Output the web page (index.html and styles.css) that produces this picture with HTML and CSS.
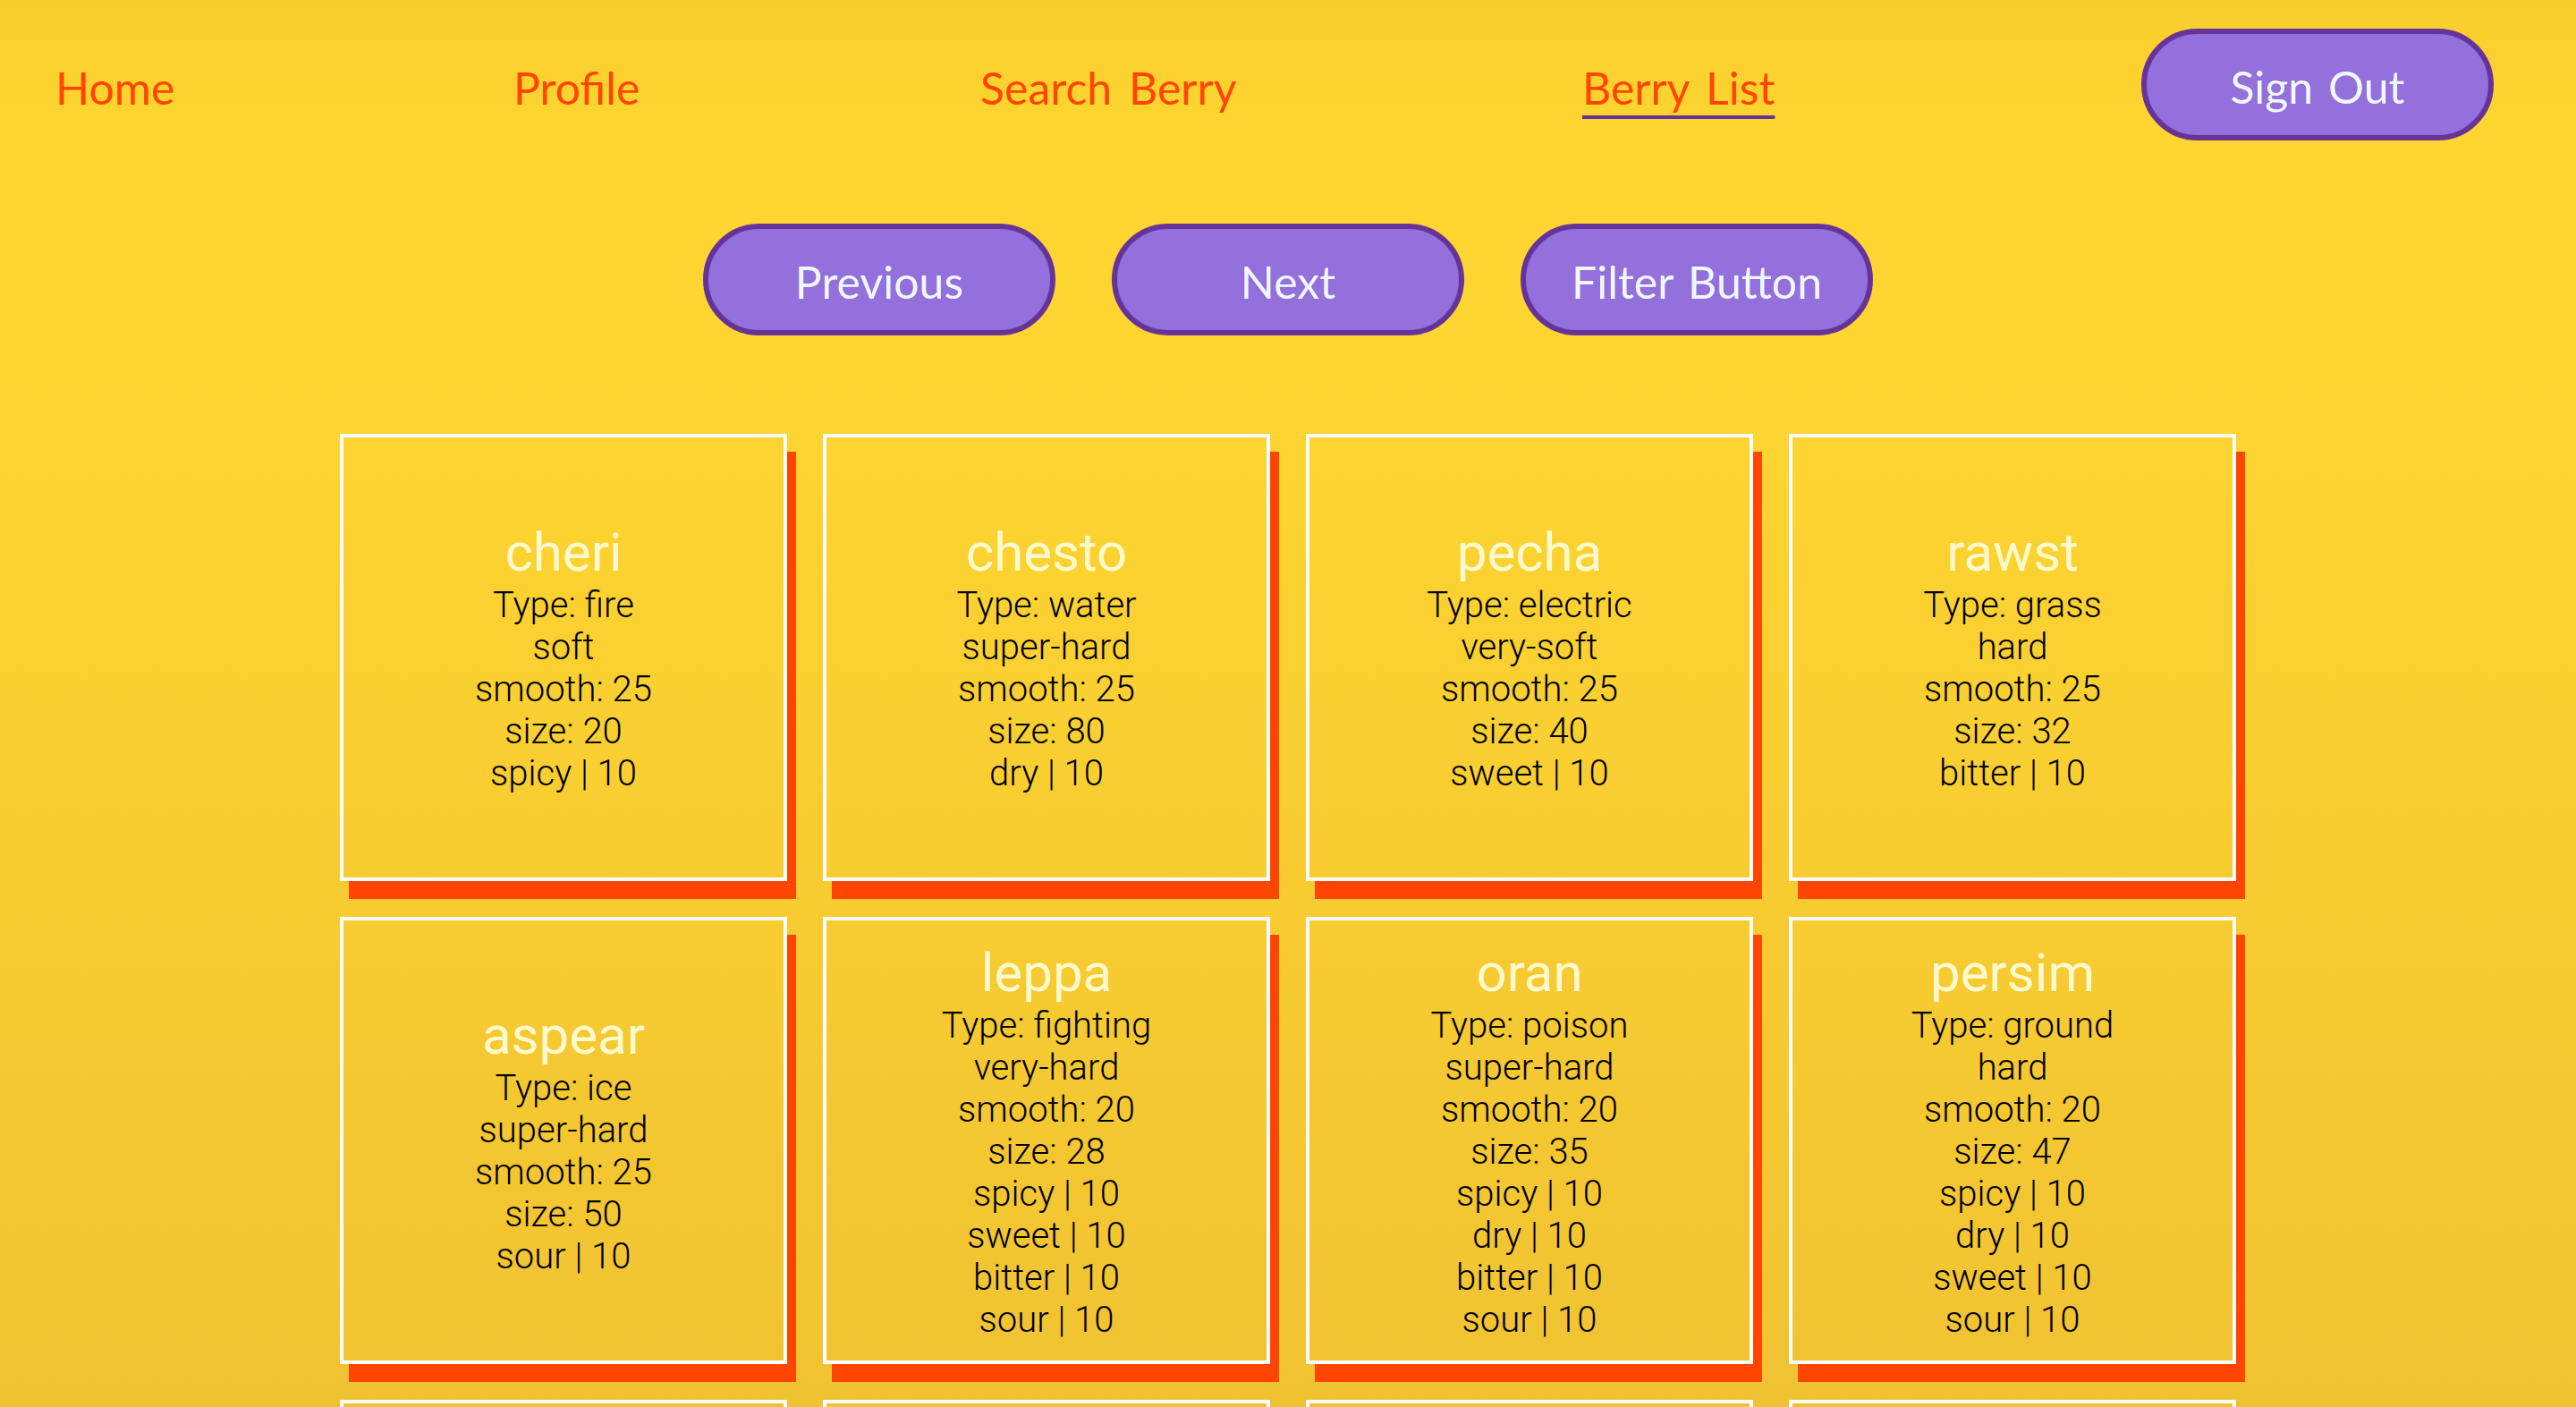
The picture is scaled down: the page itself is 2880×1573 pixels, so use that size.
FILE: index.html
```html
<!DOCTYPE html>
<html lang="en">
<head>
<meta charset="utf-8">
<title>Berry List</title>
<link rel="stylesheet" href="styles.css">
</head>
<body>
<header class="nav">
  <a class="nav-link" href="#">Home</a>
  <a class="nav-link" href="#">Profile</a>
  <a class="nav-link" href="#">Search Berry</a>
  <a class="nav-link active" href="#">Berry List</a>
  <button class="pill">Sign Out</button>
</header>

<div class="controls">
  <button class="pill">Previous</button>
  <button class="pill">Next</button>
  <button class="pill">Filter Button</button>
</div>

<main class="grid">
  <div class="card">
    <div class="name">cheri</div>
    <div class="line">Type: fire</div>
    <div class="line">soft</div>
    <div class="line">smooth: 25</div>
    <div class="line">size: 20</div>
    <div class="line">spicy | 10</div>
  </div>
  <div class="card">
    <div class="name">chesto</div>
    <div class="line">Type: water</div>
    <div class="line">super-hard</div>
    <div class="line">smooth: 25</div>
    <div class="line">size: 80</div>
    <div class="line">dry | 10</div>
  </div>
  <div class="card">
    <div class="name">pecha</div>
    <div class="line">Type: electric</div>
    <div class="line">very-soft</div>
    <div class="line">smooth: 25</div>
    <div class="line">size: 40</div>
    <div class="line">sweet | 10</div>
  </div>
  <div class="card">
    <div class="name">rawst</div>
    <div class="line">Type: grass</div>
    <div class="line">hard</div>
    <div class="line">smooth: 25</div>
    <div class="line">size: 32</div>
    <div class="line">bitter | 10</div>
  </div>
  <div class="card">
    <div class="name">aspear</div>
    <div class="line">Type: ice</div>
    <div class="line">super-hard</div>
    <div class="line">smooth: 25</div>
    <div class="line">size: 50</div>
    <div class="line">sour | 10</div>
  </div>
  <div class="card">
    <div class="name">leppa</div>
    <div class="line">Type: fighting</div>
    <div class="line">very-hard</div>
    <div class="line">smooth: 20</div>
    <div class="line">size: 28</div>
    <div class="line">spicy | 10</div>
    <div class="line">sweet | 10</div>
    <div class="line">bitter | 10</div>
    <div class="line">sour | 10</div>
  </div>
  <div class="card">
    <div class="name">oran</div>
    <div class="line">Type: poison</div>
    <div class="line">super-hard</div>
    <div class="line">smooth: 20</div>
    <div class="line">size: 35</div>
    <div class="line">spicy | 10</div>
    <div class="line">dry | 10</div>
    <div class="line">bitter | 10</div>
    <div class="line">sour | 10</div>
  </div>
  <div class="card">
    <div class="name">persim</div>
    <div class="line">Type: ground</div>
    <div class="line">hard</div>
    <div class="line">smooth: 20</div>
    <div class="line">size: 47</div>
    <div class="line">spicy | 10</div>
    <div class="line">dry | 10</div>
    <div class="line">sweet | 10</div>
    <div class="line">sour | 10</div>
  </div>
  <div class="card"></div>
  <div class="card"></div>
  <div class="card"></div>
  <div class="card"></div>
</main>
</body>
</html>
```

FILE: styles.css
```css
html {
  background: linear-gradient(180deg, #facd2e 0px, #ffd630 160px, #fdd431 500px, #f8cc31 1000px, #f0c232 1573px, #ecbc32 2400px);
  background-color: #f0c232;
}

body {
  margin: 0;
  font-family: Lato, "Open Sans", sans-serif;
}

.nav {
  display: grid;
  grid-template-columns: 512px 522px 673px 625px 394px;
  align-items: center;
  padding: 32px 0 0 62px;
}

.nav-link {
  font-family: Lato, "Open Sans", sans-serif;
  font-size: 50px;
  line-height: 60px;
  padding-top: 6px;
  color: #ff4500;
  text-decoration: none;
  word-spacing: 6px;
  justify-self: start;
}

.nav-link.active {
  text-decoration: underline;
  text-decoration-color: #663399;
  text-decoration-thickness: 4px;
  text-underline-offset: 12px;
}

.pill {
  box-sizing: border-box;
  width: 394px;
  height: 125px;
  border: 6px solid #663399;
  border-radius: 63px;
  background: #9370db;
  color: #f0f8ff;
  font-family: Lato, "Open Sans", sans-serif;
  font-size: 50px;
  line-height: 60px;
  word-spacing: 4px;
  padding: 5px 0 0;
  cursor: pointer;
}

.controls {
  display: flex;
  justify-content: center;
  gap: 63px;
  margin-top: 93px;
}

.grid {
  display: grid;
  grid-template-columns: repeat(4, 500px);
  gap: 40px;
  justify-content: center;
  margin-top: 110px;
  padding-bottom: 60px;
}

.card {
  box-sizing: border-box;
  width: 500px;
  height: 500px;
  border: 4px solid #ffffff;
  box-shadow: 10px 20px 0 #ff4500;
  display: flex;
  flex-direction: column;
  justify-content: center;
  align-items: center;
  text-align: center;
  font-family: Roboto, "Liberation Sans", sans-serif;
}

.name {
  font-size: 60px;
  font-weight: 400;
  line-height: normal;
  color: #fffacd;
}

.line {
  font-size: 40px;
  font-weight: 300;
  line-height: normal;
  color: #000000;
}
```
